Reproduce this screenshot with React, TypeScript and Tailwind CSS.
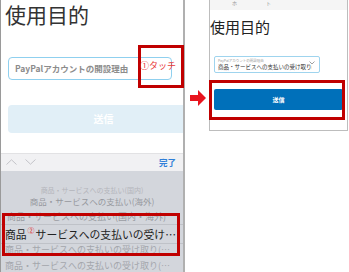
import React from "react";

const jp = { fontFamily: '"Noto Sans CJK JP", "Noto Sans", sans-serif' };

export default function App() {
  return (
    <div className="relative flex h-[272px] w-[349px] bg-white overflow-hidden" style={jp}>
      {/* Left panel */}
      <div className="relative flex h-[272px] w-[185px] shrink-0 flex-col border-l border-r-2 border-l-[#9a9a9a] border-r-[#b0b0b0] bg-white">
        <div className="h-[28px] pl-[4px] text-[21px] leading-[28px] text-[#333]">使用目的</div>
        <div className="mt-[29px] ml-[7px] flex h-[25px] w-[164px] items-center rounded-[4px] border border-[#8fd0ef] pl-[6px]">
          <span className="whitespace-nowrap text-[8.5px] font-bold text-[#8c8c8c]">PayPalアカウントの開設理由</span>
        </div>
        <div className="mt-[25px] ml-[7px] flex h-[30px] items-center justify-center rounded-l-[4px] bg-[#e1eff7] pl-[16px]">
          <span className="text-[10px] font-bold text-white">送信</span>
        </div>
        <div className="h-[22px]" />
        <div className="flex h-[20px] items-center justify-between border-t border-[#e2e2e4] bg-[#f1f1f3] pl-[5px] pr-[7px]">
          <div className="flex items-center gap-[8px]">
            <svg width="11" height="6" viewBox="0 0 11 6"><path d="M0.5 5.5 L5.5 0.8 L10.5 5.5" fill="none" stroke="#c3c3c8" strokeWidth="1" /></svg>
            <svg width="11" height="6" viewBox="0 0 11 6"><path d="M0.5 0.5 L5.5 5.2 L10.5 0.5" fill="none" stroke="#c3c3c8" strokeWidth="1" /></svg>
          </div>
          <span className="text-[8.5px] font-bold text-[#2f7fd8]">完了</span>
        </div>
        <div className="flex flex-1 flex-col bg-[#d3d6dc]">
          <div className="mt-[15px] h-[9px] whitespace-nowrap text-center text-[7px] leading-[9px] text-[#b3b5bb]">商品・サービスへの支払い(国内)</div>
          <div className="h-[13px] whitespace-nowrap text-center text-[8.5px] leading-[13px] text-[#96989e]">商品・サービスへの支払い(海外)</div>
          <div className="mt-[3px] h-[12px] whitespace-nowrap pl-[6px] text-[9px] leading-[12px] text-[#9a9ca2]">商品・サービスへの支払い(国内・海外)</div>
          <div className="mt-[1px] h-[1px] bg-[#bfc2c8]" />
          <div className="flex h-[18px] items-center whitespace-nowrap pl-[4px] text-[10.8px] leading-[18px] text-[#222]">
            商品<span className="relative -top-[4px] px-[1px] text-[7px] text-[#e02020]">②</span>サービスへの支払いの受け…
          </div>
          <div className="h-[1px] bg-[#bfc2c8]" />
          <div className="h-[12px] whitespace-nowrap pl-[4px] text-[9px] leading-[12px] text-[#a4a6ac]">商品・サービスへの支払いの受け取り(…</div>
          <div className="mt-[4px] h-[12px] whitespace-nowrap pl-[4px] text-[9px] leading-[12px] text-[#a4a6ac]">商品・サービスへの支払いの受け取り(…</div>
        </div>

        {/* annotations */}
        <div className="absolute left-[137px] top-[45px] h-[43px] w-[46px] border-[3px] border-[#c00000]" />
        <div className="absolute left-[139px] top-[59px] whitespace-nowrap text-[9px] leading-[14px] text-[#e83a3a]">①タッチ</div>
        <div className="absolute left-[1px] top-[213px] h-[43px] w-[178px] border-[3px] border-[#c00000]" />
      </div>

      {/* Arrow */}
      <div className="flex w-[24px] shrink-0 items-start pt-[90px] pl-[5px]">
        <svg width="16" height="16" viewBox="0 0 16 16">
          <path d="M0 5 H8 V0 L16 8 L8 16 V11 H0 Z" fill="#e8141e" />
        </svg>
      </div>

      {/* Right panel */}
      <div className="relative h-[131px] w-[139px] shrink-0 border-l border-r border-b border-[#bdbdbd] bg-white">
        <div className="relative h-[10px] bg-[#f5f5f5]">
          <span className="absolute left-[22px] top-0 text-[5px] leading-[5px] text-[#999]">ホ</span>
          <span className="absolute left-[56px] top-0 text-[5px] leading-[5px] text-[#999]">ト</span>
        </div>
        <div className="mt-[7px] pl-[0px] text-[15px] leading-[20px] text-[#222]">使用目的</div>
        <div className="relative mt-[19px] ml-[4px] flex h-[17px] w-[106px] flex-col justify-center rounded-[2px] border border-[#9fd4ee] pl-[3px]">
          <span className="whitespace-nowrap text-[3.5px] leading-[5px] text-[#9a9a9a]">PayPalアカウントの開設理由</span>
          <span className="w-[94px] overflow-hidden whitespace-nowrap text-[5.5px] leading-[8px] text-[#333]">商品・サービスへの支払いの受け取り(</span>
          <svg className="absolute right-[4px] top-[4px]" width="6" height="4" viewBox="0 0 6 4"><path d="M0.5 0.5 L3 3 L5.5 0.5" fill="none" stroke="#888" strokeWidth="0.8" /></svg>
        </div>
        <div className="mt-[16px] ml-[4px] flex h-[21px] w-[129px] items-center justify-center rounded-[2px] bg-[#0070ba]">
          <span className="text-[6px] font-bold text-white">送信</span>
        </div>
        <div className="absolute left-[-1px] top-[80px] h-[40px] w-[136px] border-[3px] border-[#c00000]" />
      </div>
    </div>
  );
}
